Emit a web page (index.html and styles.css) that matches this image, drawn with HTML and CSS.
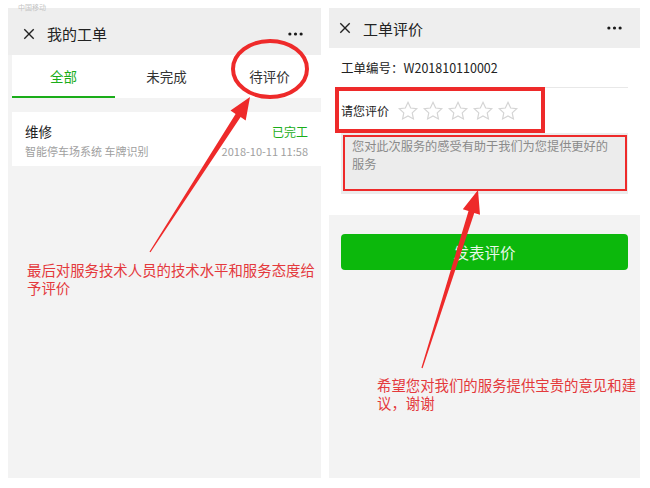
FILE: index.html
```html
<!DOCTYPE html>
<html lang="zh-CN">
<head>
    <meta charset="UTF-8">
    <title>工单评价</title>
    <link rel="stylesheet" href="styles.css">
</head>
<body>
    <div class="page">
        <!-- left phone: 我的工单 -->
        <div class="phone left">
            <span class="carrier">中国移动</span>
            <div class="topbar">
                <svg class="close" viewBox="0 0 14 14"><path d="M1.5 1.5l11 11M12.5 1.5l-11 11"/></svg>
                <span class="title">我的工单</span>
                <svg class="more" viewBox="0 0 16 4"><circle cx="2" cy="2" r="1.7"/><circle cx="8" cy="2" r="1.7"/><circle cx="14" cy="2" r="1.7"/></svg>
            </div>
            <div class="body">
                <div class="tabs">
                    <div class="tab active">全部</div>
                    <div class="tab">未完成</div>
                    <div class="tab">待评价</div>
                </div>
                <div class="item">
                    <div class="row">
                        <span class="name">维修</span>
                        <span class="state">已完工</span>
                    </div>
                    <div class="row sub">
                        <span>智能停车场系统 车牌识别</span>
                        <span>2018-10-11 11:58</span>
                    </div>
                </div>
            </div>
        </div>

        <!-- right phone: 工单评价 -->
        <div class="phone right">
            <div class="topbar">
                <svg class="close" viewBox="0 0 14 14"><path d="M1.5 1.5l11 11M12.5 1.5l-11 11"/></svg>
                <span class="title">工单评价</span>
                <svg class="more" viewBox="0 0 16 4"><circle cx="2" cy="2" r="1.7"/><circle cx="8" cy="2" r="1.7"/><circle cx="14" cy="2" r="1.7"/></svg>
            </div>
            <div class="card">
                <div class="order">工单编号：W201810110002</div>
                <div class="rate">
                    <span class="rate-label">请您评价</span>
                    <div class="stars">
                        <svg viewBox="0 0 24 24"><path d="M12 2.5l2.9 6.2 6.6.8-4.9 4.6 1.3 6.6L12 17.4l-5.9 3.3 1.3-6.6-4.9-4.6 6.6-.8z"/></svg>
                        <svg viewBox="0 0 24 24"><path d="M12 2.5l2.9 6.2 6.6.8-4.9 4.6 1.3 6.6L12 17.4l-5.9 3.3 1.3-6.6-4.9-4.6 6.6-.8z"/></svg>
                        <svg viewBox="0 0 24 24"><path d="M12 2.5l2.9 6.2 6.6.8-4.9 4.6 1.3 6.6L12 17.4l-5.9 3.3 1.3-6.6-4.9-4.6 6.6-.8z"/></svg>
                        <svg viewBox="0 0 24 24"><path d="M12 2.5l2.9 6.2 6.6.8-4.9 4.6 1.3 6.6L12 17.4l-5.9 3.3 1.3-6.6-4.9-4.6 6.6-.8z"/></svg>
                        <svg viewBox="0 0 24 24"><path d="M12 2.5l2.9 6.2 6.6.8-4.9 4.6 1.3 6.6L12 17.4l-5.9 3.3 1.3-6.6-4.9-4.6 6.6-.8z"/></svg>
                    </div>
                </div>
                <div class="comment">您对此次服务的感受有助于我们为您提供更好的服务</div>
            </div>
            <div class="actions">
                <button class="submit">发表评价</button>
            </div>
        </div>
    </div>

    <!-- red annotations drawn over the screenshots -->
    <svg class="marks" width="650" height="488" viewBox="0 0 650 488">
        <ellipse cx="270" cy="69" rx="37" ry="28" fill="none" stroke="#ee2a2a" stroke-width="4"/>
        <polygon fill="#ee2a2a" points="250,97 245.7,120.4 240.6,117.1 150.5,252.3 149.5,251.7 235.6,113.9 230.5,110.6"/>
        <rect x="337" y="89" width="206" height="42" fill="none" stroke="#ee2a2a" stroke-width="4"/>
        <rect x="344" y="136" width="282" height="54" fill="none" stroke="#ee2a2a" stroke-width="2"/>
        <polygon fill="#ee2a2a" points="478,190 480,214.7 474.3,212.9 422.6,368.2 421.4,367.8 468.5,211.1 462.8,209.3"/>
    </svg>
    <div class="note note-left">最后对服务技术人员的技术水平和服务态度给予评价</div>
    <div class="note note-right">希望您对我们的服务提供宝贵的意见和建议，谢谢</div>
</body>
</html>
```

FILE: styles.css
```css
body {
    margin: 0;
    background: #fff;
    font-family: "Noto Sans CJK SC", "Noto Sans", sans-serif;
    color: #333;
}

.page {
    position: relative;
    width: 650px;
    height: 488px;
    display: flex;
    gap: 8px;
    padding: 8px 0 0 8px;
    box-sizing: border-box;
}

.phone {
    position: relative;
    height: 470px;
    background: #f3f3f3;
    display: flex;
    flex-direction: column;
}

.left {
    width: 313px;
}

.right {
    width: 311px;
}

.carrier {
    position: absolute;
    top: -6px;
    left: 10px;
    font-size: 7px;
    color: #c4c4c4;
}

.topbar {
    display: flex;
    align-items: center;
    background: #eeeeee;
    padding: 0 18px 0 15px;
}

.left .topbar {
    height: 47px;
    padding-top: 4px;
    box-sizing: border-box;
}

.right .topbar {
    height: 40px;
    padding-left: 10px;
}

.close {
    width: 12px;
    height: 12px;
    margin-right: 12px;
    stroke: #222;
    stroke-width: 1.6;
    fill: none;
}

.title {
    font-size: 15px;
    color: #222;
    flex: 1;
}

.more {
    width: 15px;
    height: 4px;
    fill: #1a1a1a;
}

/* left */
.body {
    padding-left: 4px;
}

.tabs {
    display: flex;
    background: #fff;
    height: 43px;
}

.tab {
    flex: 1;
    display: flex;
    align-items: center;
    justify-content: center;
    font-size: 13.5px;
    color: #333;
    border-bottom: 2px solid transparent;
}

.tab.active {
    color: #1aad19;
    border-bottom-color: #1aad19;
}

.item {
    margin-top: 14px;
    background: #fff;
    height: 54px;
    padding: 9px 13px 0 13px;
    box-sizing: border-box;
}

.row {
    display: flex;
    justify-content: space-between;
    align-items: center;
    height: 20px;
}

.name {
    font-size: 13.5px;
    color: #222;
}

.state {
    font-size: 12px;
    color: #1aad19;
}

.sub {
    font-size: 11px;
    color: #a0a0a0;
}

/* right */
.card {
    background: #fff;
    padding: 0 12px 21px 12px;
}

.order {
    height: 39px;
    line-height: 39px;
    font-size: 12.5px;
    color: #222;
    border-bottom: 1px solid #e8e8e8;
}

.rate {
    display: flex;
    align-items: center;
    height: 45px;
}

.rate-label {
    font-size: 12px;
    color: #222;
    width: 56px;
}

.stars {
    display: flex;
    gap: 3px;
}

.stars svg {
    width: 22px;
    height: 22px;
    fill: #fff;
    stroke: #d4d4d4;
    stroke-width: 1.3;
}

.comment {
    background: #ececec;
    height: 61px;
    box-sizing: border-box;
    padding: 4px 16px 0 11px;
    font-size: 12.2px;
    line-height: 18px;
    color: #8a8a8a;
}

.actions {
    padding: 19px 12px 0 12px;
}

.submit {
    width: 100%;
    height: 36px;
    border: none;
    border-radius: 4px;
    background: #0cb80c;
    color: #e8f8e8;
    font-family: inherit;
    font-size: 15.5px;
}

/* annotations */
.marks {
    position: absolute;
    top: 0;
    left: 0;
    pointer-events: none;
}

.note {
    position: absolute;
    font-size: 14.4px;
    line-height: 18px;
    color: #e4393c;
}

.note-left {
    left: 27px;
    top: 261px;
    width: 292px;
}

.note-right {
    left: 377px;
    top: 376px;
    width: 266px;
}
```
